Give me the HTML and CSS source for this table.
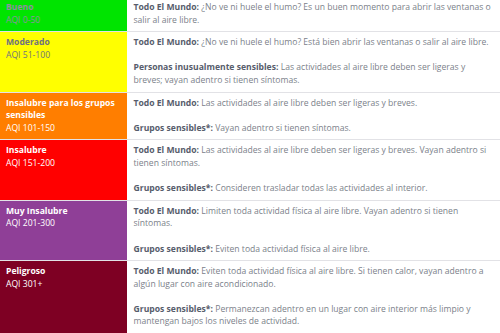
FILE: index.html
```html
<!DOCTYPE html>
<html lang="es">
<head>
<meta charset="utf-8">
<title>AQI</title>
<link rel="stylesheet" href="styles.css">
</head>
<body>
<table class="aqi">
  <colgroup><col class="col-level"><col class="col-advice"></colgroup>
  <tr class="good">
    <td class="level"><strong>Bueno</strong><br>AQI 0-50</td>
    <td class="advice"><p><b>Todo El Mundo:</b> ¿No ve ni huele el humo? Es un buen momento para abrir las ventanas o salir al aire libre.</p></td>
  </tr>
  <tr class="moderate">
    <td class="level"><strong>Moderado</strong><br>AQI 51-100</td>
    <td class="advice"><p><b>Todo El Mundo:</b> ¿No ve ni huele el humo? Está bien abrir las ventanas o salir al aire libre.</p><p><b>Personas inusualmente sensibles:</b> Las actividades al aire libre deben ser ligeras y breves; vayan adentro si tienen síntomas.</p></td>
  </tr>
  <tr class="usg">
    <td class="level"><strong>Insalubre para los grupos sensibles</strong><br>AQI 101-150</td>
    <td class="advice"><p><b>Todo El Mundo:</b> Las actividades al aire libre deben ser ligeras y breves.</p><p><b>Grupos sensibles*:</b> Vayan adentro si tienen síntomas.</p></td>
  </tr>
  <tr class="unhealthy">
    <td class="level"><strong>Insalubre</strong><br>AQI 151-200</td>
    <td class="advice"><p><b>Todo El Mundo:</b> Las actividades al aire libre deben ser ligeras y breves. Vayan adentro si tienen síntomas.</p><p><b>Grupos sensibles*:</b> Consideren trasladar todas las actividades al interior.</p></td>
  </tr>
  <tr class="very">
    <td class="level"><strong>Muy Insalubre</strong><br>AQI 201-300</td>
    <td class="advice"><p><b>Todo El Mundo:</b> Limiten toda actividad física al aire libre. Vayan adentro si tienen síntomas.</p><p><b>Grupos sensibles*:</b> Eviten toda actividad física al aire libre.</p></td>
  </tr>
  <tr class="hazard">
    <td class="level"><strong>Peligroso</strong><br>AQI 301+</td>
    <td class="advice"><p><b>Todo El Mundo:</b> Eviten toda actividad física al aire libre. Si tienen calor, vayan adentro a algún lugar con aire acondicionado.</p><p><b>Grupos sensibles*:</b> Permanezcan adentro en un lugar con aire interior más limpio y mantengan bajos los niveles de actividad.</p></td>
  </tr>
</table>
</body>
</html>
```

FILE: styles.css
```css
html, body {
  margin: 0;
  padding: 0;
  background: #fff;
}

.aqi {
  width: 500px;
  margin-top: -3px;
  table-layout: fixed;
  border-collapse: collapse;
  font-family: "Open Sans", "Liberation Sans", sans-serif;
  font-size: 8.6px;
  line-height: 12.6px;
  color: #7b7f8a;
}

.col-level {
  width: 127px;
}

.aqi td {
  vertical-align: top;
  padding: 4px 7px 5px 6px;
  border-bottom: 1px solid #e2e2e6;
}

.level {
  color: #fff;
  border-right: 1px solid #fff;
}

.level strong {
  font-weight: 700;
}

.advice p {
  margin: 0 0 12.6px 0;
}

.advice p:last-child {
  margin-bottom: 0;
}

.advice b {
  font-weight: 700;
  color: #575d6c;
}

.good .level { background: #00e400; color: #8d8fa0; }
.moderate .level { background: #ffff00; color: #70727f; }
.usg .level { background: #ff7e00; }
.unhealthy .level { background: #ff0000; }
.very .level { background: #8f3f97; }
.hazard .level { background: #7e0023; }
```
